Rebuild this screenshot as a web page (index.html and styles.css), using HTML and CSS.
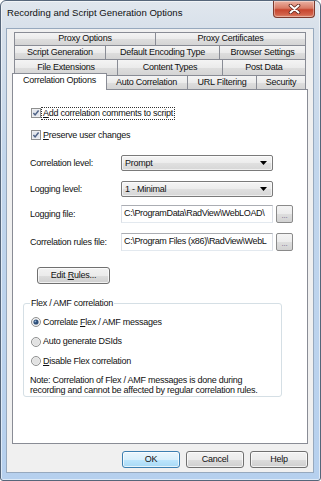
FILE: index.html
```html
<!DOCTYPE html>
<html>
<head>
<meta charset="utf-8">
<title>Recording and Script Generation Options</title>
<link rel="stylesheet" href="styles.css">
</head>
<body>
<div class="window">
  <div class="titlebar">
    <span class="title">Recording and Script Generation Options</span>
    <span class="close">
      <svg width="13" height="10" viewBox="0 0 13 10">
        <path d="M2.5 1.5 L10.5 8.5 M10.5 1.5 L2.5 8.5" stroke="#5a2219" stroke-width="3.6" stroke-linecap="round" fill="none"/>
        <path d="M2.5 1.5 L10.5 8.5 M10.5 1.5 L2.5 8.5" stroke="#ffffff" stroke-width="2" stroke-linecap="round" fill="none"/>
      </svg>
    </span>
  </div>
  <div class="client">
    <div class="tabs">
      <div class="tabrow r1">
        <div class="tab">Proxy Options</div>
        <div class="tab">Proxy Certificates</div>
      </div>
      <div class="tabrow r2">
        <div class="tab">Script Generation</div>
        <div class="tab">Default Encoding Type</div>
        <div class="tab">Browser Settings</div>
      </div>
      <div class="tabrow r3">
        <div class="tab">File Extensions</div>
        <div class="tab">Content Types</div>
        <div class="tab">Post Data</div>
      </div>
      <div class="tabrow r4">
        <div class="tab sel">Correlation Options</div>
        <div class="tab">Auto Correlation</div>
        <div class="tab">URL Filtering</div>
        <div class="tab">Security</div>
      </div>
    </div>

    <div class="panel">
      <div class="chk">
        <svg class="box" width="10" height="10" viewBox="0 0 10 10">
          <rect x="0.5" y="0.5" width="9" height="9" fill="#f6f6f6" stroke="#8e8f8f"/>
          <rect x="1.5" y="1.5" width="7" height="7" fill="#e3e6ec"/>
          <path d="M2.4 5 L4.1 6.9 L7.6 2.5" stroke="#4f6386" stroke-width="1.5" fill="none"/>
        </svg>
        <span class="lbl focus"><u>A</u>dd correlation comments to script</span>
      </div>
      <div class="chk">
        <svg class="box" width="10" height="10" viewBox="0 0 10 10">
          <rect x="0.5" y="0.5" width="9" height="9" fill="#f6f6f6" stroke="#8e8f8f"/>
          <rect x="1.5" y="1.5" width="7" height="7" fill="#e3e6ec"/>
          <path d="M2.4 5 L4.1 6.9 L7.6 2.5" stroke="#4f6386" stroke-width="1.5" fill="none"/>
        </svg>
        <span class="lbl"><u>P</u>reserve user changes</span>
      </div>

      <div class="form">
        <div class="frow sel-row">
          <span class="flabel">Correlation level:</span>
          <div class="select"><span>Prompt</span>
            <svg width="7" height="4" viewBox="0 0 7 4"><path d="M0 0 H7 L3.5 4 Z" fill="#000"/></svg>
          </div>
        </div>
        <div class="frow sel-row gap10">
          <span class="flabel">Logging level:</span>
          <div class="select"><span>1 - Minimal</span>
            <svg width="7" height="4" viewBox="0 0 7 4"><path d="M0 0 H7 L3.5 4 Z" fill="#000"/></svg>
          </div>
        </div>
        <div class="frow file-row gap8">
          <span class="flabel">Logging file:</span>
          <div class="field"><span>C:\ProgramData\RadView\WebLOAD\</span></div>
          <div class="browse">...</div>
        </div>
        <div class="frow file-row gap10">
          <span class="flabel">Correlation rules file:</span>
          <div class="field"><span>C:\Program Files (x86)\RadView\WebL</span></div>
          <div class="browse">...</div>
        </div>
      </div>

      <div class="btn edit"><span>Edit <u>R</u>ules...</span></div>

      <fieldset class="group">
        <legend>Flex / AMF correlation</legend>
        <div class="rad">
          <svg width="10" height="10" viewBox="0 0 10 10">
            <circle cx="5" cy="5" r="4.5" fill="#f3f3f3" stroke="#8e8f8f"/>
            <circle cx="5" cy="5" r="2.6" fill="#2f4f78"/>
            <circle cx="4.4" cy="4.4" r="0.9" fill="#8fb0d6"/>
          </svg>
          <span class="lbl">Correlate <u>F</u>lex / AMF messages</span>
        </div>
        <div class="rad">
          <svg width="10" height="10" viewBox="0 0 10 10">
            <circle cx="5" cy="5" r="4.5" fill="#f1f1f1" stroke="#8e8f8f"/>
            <circle cx="5" cy="5" r="3.2" fill="#e2e2e2"/>
          </svg>
          <span class="lbl">Auto generate DSIds</span>
        </div>
        <div class="rad">
          <svg width="10" height="10" viewBox="0 0 10 10">
            <circle cx="5" cy="5" r="4.5" fill="#f1f1f1" stroke="#8e8f8f"/>
            <circle cx="5" cy="5" r="3.2" fill="#e2e2e2"/>
          </svg>
          <span class="lbl"><u>D</u>isable Flex correlation</span>
        </div>
        <p class="note">Note: Correlation of Flex / AMF messages is done during recording and cannot be affected by regular correlation rules.</p>
      </fieldset>
    </div>

    <div class="buttons">
      <div class="btn default">OK</div>
      <div class="btn">Cancel</div>
      <div class="btn">Help</div>
    </div>
  </div>
</div>
</body>
</html>
```

FILE: styles.css
```css
* { box-sizing: border-box; }
html, body { margin: 0; padding: 0; }
body {
  width: 321px;
  height: 481px;
  overflow: hidden;
  background: #ffffff;
  font-family: "Liberation Sans", Arial, sans-serif;
  font-size: 9px;
  letter-spacing: -0.25px;
  line-height: 11px;
  color: #111;
}
u { text-decoration: underline; text-underline-offset: 1px; }

.window {
  width: 321px;
  height: 481px;
  display: flex;
  flex-direction: column;
  border: 1px solid #56667a;
  border-radius: 6px 6px 3px 3px;
  padding: 0 6px 7px 5px;
  background: linear-gradient(to bottom, #e1e7ee 0px, #d7e0ea 30px, #c2d6ec 160px, #b6d0ee 100%);
  box-shadow: inset 0 0 0 1px rgba(255,255,255,0.55);
}

.titlebar {
  flex: none;
  height: 27px;
  display: flex;
  justify-content: space-between;
  align-items: flex-start;
}
.title {
  font-size: 9.6px;
  letter-spacing: 0;
  margin: 6px 0 0 1px;
  line-height: 11px;
  color: #111;
}
.close {
  width: 42px;
  height: 17px;
  margin-right: -1px;
  border: 1px solid #7d3a2e;
  border-top: none;
  border-radius: 0 0 4px 4px;
  background: linear-gradient(to bottom, #eab2a3 0%, #d87a65 45%, #c7452e 55%, #d2624a 85%, #e08a6e 100%);
  box-shadow: inset 0 0 0 1px rgba(255,255,255,0.35);
  display: flex;
  align-items: center;
  justify-content: center;
}

.client {
  flex: 1;
  display: flex;
  flex-direction: column;
  background: #f0f0f0;
  border: 1px solid #97a9be;
  padding: 3px 5px 0 5px;
}

.tabs { padding: 0 2px; flex: none; }
.tabrow { display: grid; }
.r1 { grid-template-columns: 141px 151px; height: 13px; }
.r2 { grid-template-columns: 91px 114px 87px; height: 14px; }
.r3 { grid-template-columns: 103px 105px 84px; height: 16px; }
.r4 { grid-template-columns: 91px 82px 69px 50px; height: 16px; margin-top: -2px; }

.tab {
  border: 1px solid #898c95;
  border-right: none;
  border-bottom: none;
  background: linear-gradient(to bottom, #f4f4f4 0%, #ebebeb 50%, #dedede 51%, #d4d4d4 100%);
  display: flex;
  justify-content: center;
  align-items: flex-start;
  white-space: nowrap;
  line-height: 11px;
}
.tab:last-child { border-right: 1px solid #898c95; }
.r1 .tab { padding-top: 0px; }
.r2 .tab { padding-top: 1px; }
.r3 .tab { padding-top: 2px; }
.r4 .tab { margin-top: 2px; padding-top: 1px; }
.r4 .tab.sel {
  margin: 0 -2px -1px -2px;
  padding-top: 1px;
  background: #ffffff;
  border-right: 1px solid #898c95;
  position: relative;
  z-index: 2;
}

.panel {
  flex: 1;
  background: #ffffff;
  border: 1px solid #898c95;
  padding: 18px 0 0 10px;
}

.chk {
  display: flex;
  align-items: center;
  height: 10px;
  margin-left: 8px;
}
.chk + .chk { margin-top: 12px; }
.box { flex: none; }
.lbl { margin-left: 2px; white-space: nowrap; }
.focus { outline: 1px dotted #333; outline-offset: 0; padding: 0 1px; margin-left: 1px; }

.form { margin: 15px 0 0 7px; }
.frow {
  display: grid;
  grid-template-columns: 88px 152px 17px;
  column-gap: 3px;
  align-items: center;
}
.sel-row { height: 16px; }
.file-row { height: 18px; }
.gap10 { margin-top: 10px; }
.gap8 { margin-top: 8px; }
.flabel { white-space: nowrap; }

.select {
  height: 16px;
  border: 1px solid #7a7a7a;
  border-radius: 2px;
  background: linear-gradient(to bottom, #f5f5f5 0%, #ececec 50%, #e0e0e0 51%, #d6d6d6 100%);
  box-shadow: inset 0 0 0 1px rgba(255,255,255,0.6);
  display: flex;
  align-items: center;
  justify-content: space-between;
  padding: 0 5px 0 3px;
}
.field {
  height: 18px;
  border: 1px solid #abadb3;
  border-left-color: #dbdfe6;
  border-right-color: #dbdfe6;
  border-bottom-color: #e3e9ef;
  background: #ffffff;
  padding: 2px 0 0 2px;
  white-space: nowrap;
  overflow: hidden;
  letter-spacing: -0.35px;
}
.browse {
  height: 18px;
  border: 1px solid #8a8a8a;
  border-radius: 2px;
  background: linear-gradient(to bottom, #f4f4f4 0%, #ececec 50%, #dedede 51%, #d2d2d2 100%);
  display: flex;
  justify-content: center;
  align-items: flex-end;
  color: #6d6a8a;
  font-size: 8px;
  line-height: 10px;
  padding-bottom: 1px;
}

.btn {
  height: 17px;
  border: 1px solid #707070;
  border-radius: 3px;
  background: linear-gradient(to bottom, #f2f2f2 0%, #ebebeb 50%, #dddddd 51%, #cfcfcf 100%);
  box-shadow: inset 0 0 0 1px rgba(255,255,255,0.7);
  display: flex;
  align-items: center;
  justify-content: center;
  white-space: nowrap;
}
.edit { width: 73px; margin: 16px 0 0 14px; }

.group {
  margin: 14px 0 0 0;
  width: 259px;
  border: 1px solid #d5dfe5;
  border-radius: 3px;
  padding: 8px 6px 1px 7px;
  min-width: 0;
}
.group legend {
  padding: 0 1px;
  margin-left: -1px;
  line-height: 11px;
  color: #111;
}
.rad {
  display: flex;
  align-items: center;
  height: 10px;
}
.rad + .rad { margin-top: 9.5px; }
.rad svg { flex: none; }
.note {
  margin: 9px 0 0 -1px;
  line-height: 10px;
}

.buttons {
  flex: none;
  display: flex;
  justify-content: flex-end;
  gap: 6px;
  margin: 7px 0 4px 0;
}
.buttons .btn { width: 58px; }
.btn.default {
  border-color: #3c7fb1;
  background: linear-gradient(to bottom, #eaf6fd 0%, #d9f0fc 50%, #bee6fd 51%, #a7d9f5 100%);
}
```
